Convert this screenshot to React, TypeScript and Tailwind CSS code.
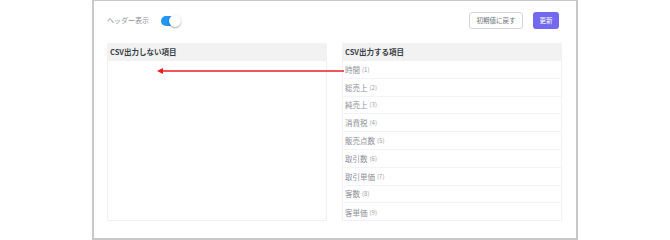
import { useState } from "react";

const exportItems = [
  "時間",
  "総売上",
  "純売上",
  "消費税",
  "販売点数",
  "取引数",
  "取引単価",
  "客数",
  "客単価",
];

type ToggleProps = {
  checked: boolean;
  onChange: (checked: boolean) => void;
};

const Toggle = ({ checked, onChange }: ToggleProps) => {
  return (
    <button
      className="relative w-[19px] h-[10px] rounded-full bg-[#2196f3]"
      onClick={() => onChange(!checked)}
    >
      <span
        className={
          checked
            ? "absolute right-[-1px] top-[-1px] w-[12px] h-[12px] rounded-full bg-white shadow-[0_1px_2px_rgba(0,0,0,0.35)]"
            : "absolute left-[-1px] top-[-1px] w-[12px] h-[12px] rounded-full bg-white shadow-[0_1px_2px_rgba(0,0,0,0.35)]"
        }
      />
    </button>
  );
};

type PanelProps = {
  title: string;
  items: string[];
};

const Panel = ({ title, items }: PanelProps) => {
  return (
    <div className="w-[220px] flex flex-col">
      <div className="h-[18px] bg-[#f2f2f2] flex items-center px-[3px] text-[7.5px] font-bold text-[#3a3f47]">
        {title}
      </div>
      <div className="h-[160px] border border-t-0 border-[#edf0f6] rounded-b-[2px]">
        {items.map((item, i) => (
          <div
            key={item}
            className="h-[17.8px] flex items-center px-[2px] border-b border-[#f1f3f8] last:border-b-0 text-[7.5px] text-[#8b8f96]"
          >
            {item}
            <span className="ml-[2px] text-[6px] text-[#9a9ea5]">({i + 1})</span>
          </div>
        ))}
      </div>
    </div>
  );
};

export default function App() {
  const [showHeader, setShowHeader] = useState(true);

  return (
    <div
      className="relative w-[670px] h-[240px] bg-white"
      style={{ fontFamily: '"Noto Sans CJK JP", "Noto Sans", sans-serif' }}
    >
      <div className="ml-[92px] w-[486px] h-[240px] border-2 border-t border-[#c8c8c8] px-[13px]">
        <div className="flex items-center justify-between pt-[11px] pr-[4px]">
          <div className="flex items-center gap-[12px]">
            <span className="text-[7px] text-[#8b909a]">ヘッダー表示</span>
            <Toggle checked={showHeader} onChange={setShowHeader} />
          </div>
          <div className="flex items-center gap-[10px]">
            <button className="h-[17px] w-[54px] rounded-[3px] border border-[#d6d6d6] bg-white text-[6.5px] text-[#6a6f77]">
              初期値に戻す
            </button>
            <button className="h-[17px] w-[26px] rounded-[3px] bg-[#7468ee] text-[6.5px] text-white">
              更新
            </button>
          </div>
        </div>
        <div className="flex gap-[15px] mt-[14px]">
          <Panel title="CSV出力しない項目" items={[]} />
          <Panel title="CSV出力する項目" items={exportItems} />
        </div>
      </div>
      <svg
        className="absolute left-[157px] top-[67px]"
        width="188"
        height="8"
        viewBox="0 0 188 8"
      >
        <line x1="5" y1="4" x2="187" y2="4" stroke="#ee1c1c" strokeWidth="1.6" />
        <polygon points="0,4 6,1 6,7" fill="#ee1c1c" />
      </svg>
    </div>
  );
}
